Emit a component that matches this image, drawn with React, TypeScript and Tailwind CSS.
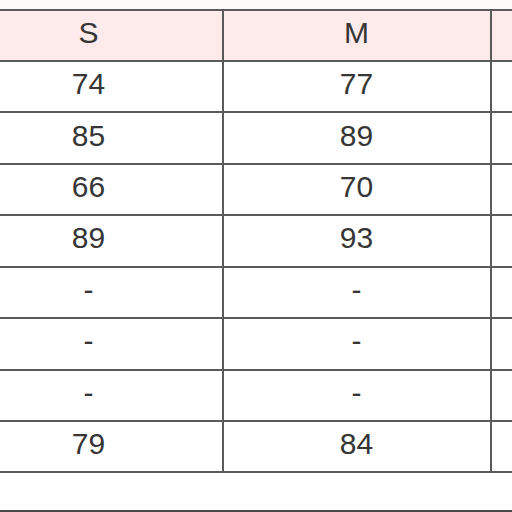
const HEADERS = ['S', 'M', 'L'];

const ROWS: string[][] = [
  ['74', '77', ''],
  ['85', '89', ''],
  ['66', '70', ''],
  ['89', '93', ''],
  ['-', '-', ''],
  ['-', '-', ''],
  ['-', '-', ''],
  ['79', '84', ''],
];

function Cell({ text, header }: { text: string; header?: boolean }) {
  return (
    <div
      className={
        'w-[268px] shrink-0 h-[51.44px] flex items-center justify-center pb-[6px] border-r-2 border-b-2 border-[#5a5a5a] ' +
        (header ? 'bg-[#fdeaea]' : 'bg-white')
      }
    >
      {text}
    </div>
  );
}

export default function App() {
  return (
    <div className="w-[512px] h-[512px] overflow-hidden bg-white text-[30px] text-[#363636] font-['Liberation_Sans',Arial,sans-serif]">
      <div className="h-[8.5px] bg-[#fffafa]" />
      <div className="ml-[-44.5px] w-[900px] border-t-2 border-[#5a5a5a]">
        <div className="flex">
          {HEADERS.map(h => (
            <Cell key={h} text={h === 'L' ? '' : h} header />
          ))}
        </div>
        {ROWS.map((row, i) => (
          <div key={i} className="flex">
            {row.map((v, j) => (
              <Cell key={j} text={v} />
            ))}
          </div>
        ))}
      </div>
      <div className="h-[38.5px] border-b-2 border-[#4a4a4a]" />
    </div>
  );
}
